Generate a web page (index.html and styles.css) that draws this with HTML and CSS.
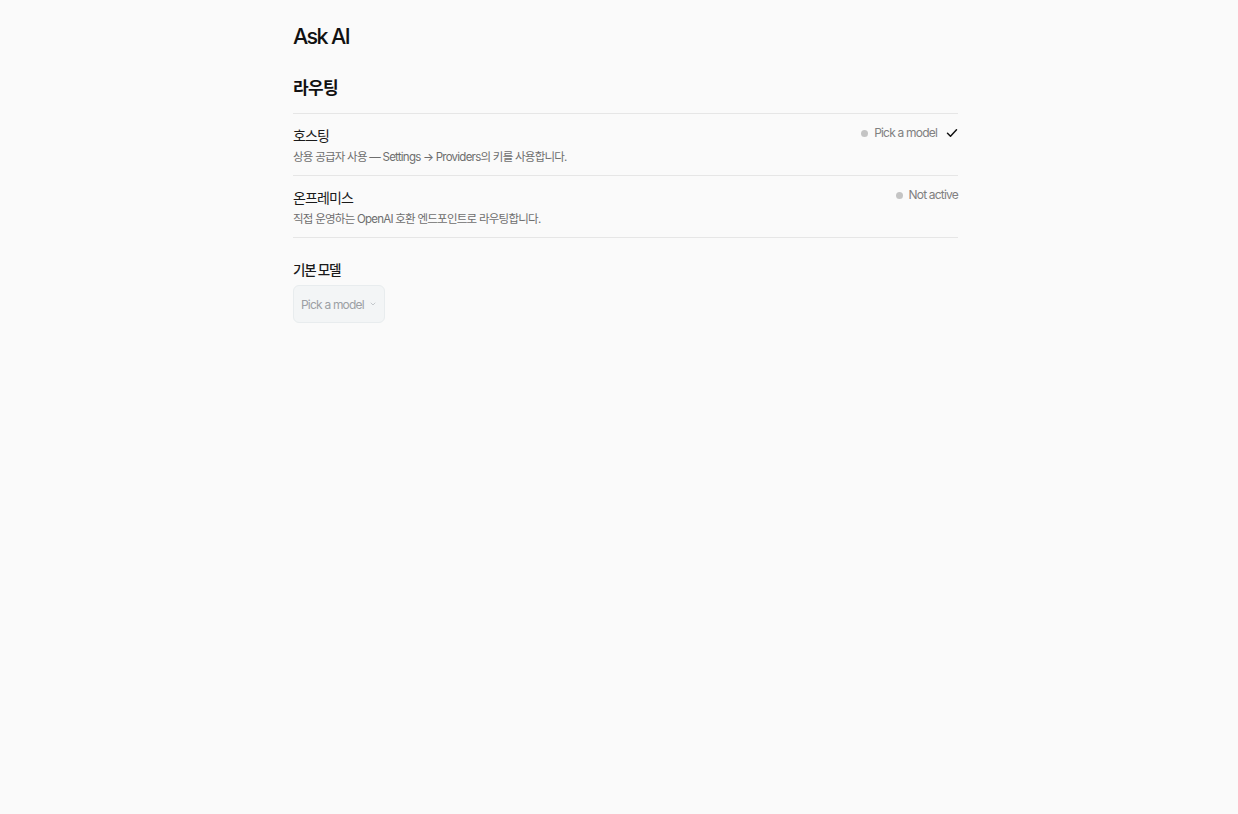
FILE: index.html
```html
<!DOCTYPE html>
<html lang="ko">
<head>
<meta charset="utf-8">
<title>Ask AI</title>
<link rel="stylesheet" href="styles.css">
</head>
<body>
<main class="page">
  <h1 class="page-title">Ask AI</h1>
  <section class="section">
    <h2 class="section-title">라우팅</h2>
    <div class="rows">
      <div class="row">
        <div class="row-text">
          <div class="row-title">호스팅</div>
          <div class="row-desc">상용 공급자 사용 — Settings → Providers의 키를 사용합니다.</div>
        </div>
        <div class="row-status">
          <span class="dot"></span>
          <span class="status-text">Pick a model</span>
          <svg class="check" width="12" height="12" viewBox="0 0 12 12" aria-hidden="true"><path d="M1.5 6.3 L4.5 9.2 L10.5 2.8" fill="none" stroke="#111" stroke-width="1.5" stroke-linecap="round" stroke-linejoin="round"/></svg>
        </div>
      </div>
      <div class="row">
        <div class="row-text">
          <div class="row-title">온프레미스</div>
          <div class="row-desc">직접 운영하는 OpenAI 호환 엔드포인트로 라우팅합니다.</div>
        </div>
        <div class="row-status">
          <span class="dot"></span>
          <span class="status-text">Not active</span>
        </div>
      </div>
    </div>
  </section>
  <section class="section model">
    <div class="field-label">기본 모델</div>
    <button class="select" type="button">
      <span class="select-text">Pick a model</span>
      <svg class="chev" width="6" height="4" viewBox="0 0 6 4" aria-hidden="true"><path d="M1 1 L3 3 L5 1" fill="none" stroke="#c4c8cc" stroke-width="1" stroke-linecap="round"/></svg>
    </button>
  </section>
</main>
</body>
</html>
```
FILE: styles.css
```css
* { box-sizing: border-box; }
html, body { margin: 0; padding: 0; }
body {
  background: #fafafa;
  color: #111;
  font-family: Inter, "Noto Sans CJK KR", sans-serif;
  min-height: 814px;
}
.page {
  width: 665px;
  margin-left: 293px;
  padding-top: 22px;
}
.page-title {
  margin: 0;
  font-size: 21.5px;
  font-weight: 500;
  letter-spacing: -1.6px;
  line-height: 28px;
  color: #111;
}
.section { margin-top: 25px; }
.section-title {
  margin: 0;
  font-size: 17px;
  font-weight: 600;
  line-height: 26px;
  letter-spacing: -0.7px;
  padding-bottom: 12px;
  border-bottom: 1px solid #e6e6e6;
}
.row {
  display: flex;
  justify-content: space-between;
  align-items: flex-start;
  padding: 13px 0 10px;
  border-bottom: 1px solid #e6e6e6;
}
.row-title {
  font-size: 14px;
  line-height: 18px;
  letter-spacing: -0.9px;
  color: #1a1a1a;
}
.row-desc {
  margin-top: 4px;
  font-size: 11.5px;
  line-height: 16px;
  letter-spacing: -0.75px;
  color: #6e6e6e;
}
.row-status {
  display: flex;
  align-items: center;
  gap: 6px;
  font-size: 12px;
  letter-spacing: -0.8px;
  color: #808080;
  line-height: 12px;
  white-space: nowrap;
}
.dot {
  width: 7px;
  height: 7px;
  border-radius: 50%;
  background: #c4c4c4;
}
.check { margin-left: 3px; }
.model { margin-top: 23px; }
.field-label {
  font-size: 13.5px;
  font-weight: 500;
  line-height: 18px;
  letter-spacing: -1.2px;
  color: #1a1a1a;
}
.select {
  margin-top: 6px;
  height: 38px;
  width: 92px;
  padding: 0 7px;
  display: flex;
  align-items: center;
  gap: 6px;
  background: #f3f5f6;
  border: 1px solid #e8ecee;
  border-radius: 6px;
  font-family: Inter, "Noto Sans CJK KR", sans-serif;
  font-size: 12px;
  letter-spacing: -0.8px;
  color: #9ca0a4;
  cursor: default;
  white-space: nowrap;
}
.select-text { white-space: nowrap; }
```
